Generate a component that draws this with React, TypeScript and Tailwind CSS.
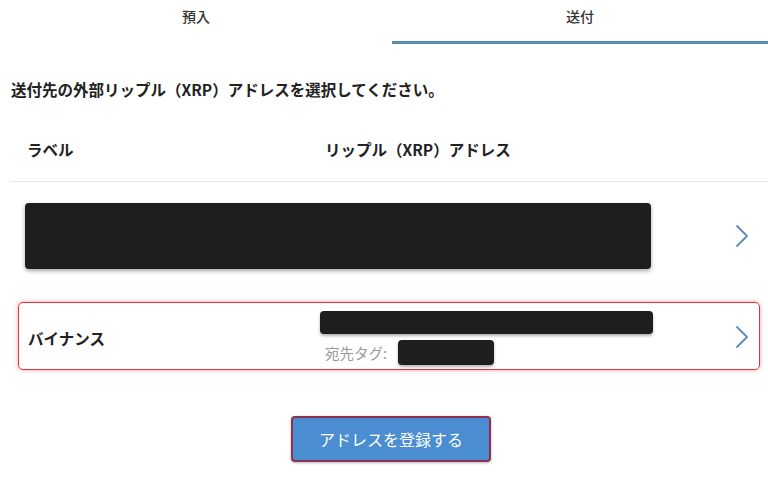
import React from "react";

const Chevron = () => (
  <svg width="14" height="24" viewBox="0 0 14 24" fill="none">
    <path d="M2 2 L12 12 L2 22" stroke="#5d8bb6" strokeWidth="1.8" strokeLinecap="round" strokeLinejoin="round" />
  </svg>
);

export default function App() {
  return (
    <div
      className="w-[768px] h-[480px] bg-white overflow-hidden text-[#222]"
      style={{ fontFamily: '"Noto Sans CJK JP", "Noto Sans", sans-serif' }}
    >
      {/* Tabs */}
      <div className="flex h-[44px]">
        <div className="w-[392px] flex justify-center pt-[6px] text-[14px] font-medium text-[#333]">預入</div>
        <div className="flex-1 flex justify-center pt-[6px] text-[14px] font-medium text-[#333] border-b-[3px] border-[#5a8bb0]">送付</div>
      </div>

      {/* Heading */}
      <div className="pl-[11px] pt-[35px] text-[15.5px] font-bold leading-[20px] text-[#222]">
        送付先の外部リップル（XRP）アドレスを選択してください。
      </div>

      {/* Table header */}
      <div className="ml-[10px] mt-[30px] flex h-[53px] items-start border-b border-[#e6e6e6]">
        <div className="w-[315px] pl-[17px] pt-[10px] text-[15.5px] font-bold leading-[20px]">ラベル</div>
        <div className="pt-[10px] text-[15.5px] font-bold leading-[20px]">リップル（XRP）アドレス</div>
      </div>

      {/* Row 1 */}
      <div className="flex items-center pt-[21px] pl-[25px] pr-[19px]">
        <div className="w-[626px] h-[66px] rounded-[4px] bg-[#1e1e1e] shadow-[0_2px_4px_rgba(0,0,0,0.35)]" />
        <div className="ml-auto flex items-center">
          <Chevron />
        </div>
      </div>

      {/* Row 2 */}
      <div className="ml-[18px] mr-[8px] mt-[33px] h-[68px] rounded-[5px] border-[1.5px] border-[#d9383f] shadow-[0_0_4px_rgba(217,56,63,0.5)] flex items-start pr-[10px]">
        <div className="w-[301px] pl-[9px] text-[15.5px] font-bold leading-[20px] pt-[25px]">バイナンス</div>
        <div className="flex flex-col pt-[8px]">
          <div className="w-[333px] h-[23px] rounded-[4px] bg-[#1e1e1e] shadow-[0_2px_3px_rgba(0,0,0,0.3)]" />
          <div className="flex items-center mt-[6px]">
            <span className="pl-[5px] text-[14.5px] leading-[20px] text-[#9a9a9a]">宛先タグ:</span>
            <div className="ml-[11px] w-[96px] h-[25px] rounded-[4px] bg-[#1e1e1e] shadow-[0_2px_3px_rgba(0,0,0,0.3)]" />
          </div>
        </div>
        <div className="ml-auto flex items-center h-full pt-[2px]">
          <Chevron />
        </div>
      </div>

      {/* Button */}
      <div className="flex justify-center mt-[46px] pl-[14px]">
        <div className="w-[200px] h-[46px] rounded-[4px] bg-[#4a8ed1] border-2 border-[#8e3152] shadow-[0_1px_3px_rgba(0,0,0,0.3)] flex items-center justify-center text-white text-[16px]">
          アドレスを登録する
        </div>
      </div>
    </div>
  );
}
